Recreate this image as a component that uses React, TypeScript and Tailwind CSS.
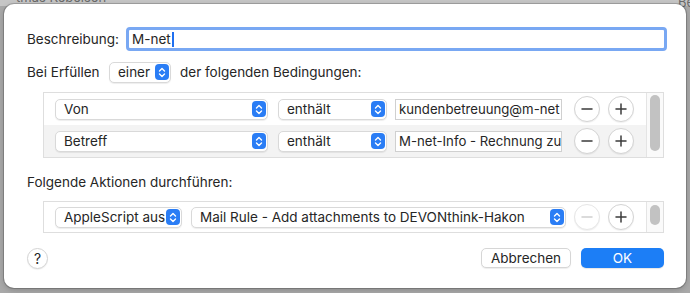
import type { ReactNode } from 'react';

const font = { fontFamily: 'Inter, "Liberation Sans", sans-serif' };

function Stepper() {
  return (
    <span className="flex h-[16px] w-[14px] shrink-0 items-center justify-center rounded-[4px] bg-[#2a7df5]">
      <svg width="8" height="11" viewBox="0 0 8 11" fill="none">
        <path d="M1.5 4 L4 1.6 L6.5 4" stroke="white" strokeWidth="1.4" strokeLinecap="round" strokeLinejoin="round" />
        <path d="M1.5 7 L4 9.4 L6.5 7" stroke="white" strokeWidth="1.4" strokeLinecap="round" strokeLinejoin="round" />
      </svg>
    </span>
  );
}

function Popup({ label, className }: { label: string; className: string }) {
  return (
    <div
      className={`flex h-[21px] shrink-0 items-center rounded-[5px] border border-[#d9d9d9] bg-white pl-[8px] pr-[1px] shadow-[0_1px_1px_rgba(0,0,0,0.07)] ${className}`}
    >
      <span className="flex-1 overflow-hidden whitespace-nowrap leading-[19px]">{label}</span>
      <Stepper />
    </div>
  );
}

function TextField({ value }: { value: string }) {
  return (
    <div className="flex h-[21px] w-[167px] shrink-0 items-center overflow-hidden whitespace-nowrap border border-[#d0d0d0] bg-white pl-[3px] text-[13.2px] leading-[19px]">
      {value}
    </div>
  );
}

function RoundButton({ sign, disabled }: { sign: '-' | '+'; disabled?: boolean }) {
  const color = disabled ? '#cfcfcf' : '#3b3b3b';
  return (
    <div
      className={`flex h-[26px] w-[26px] shrink-0 items-center justify-center rounded-full border bg-white shadow-[0_1px_1px_rgba(0,0,0,0.06)] ${
        disabled ? 'border-[#e6e6e6]' : 'border-[#d4d4d4]'
      }`}
    >
      <svg width="12" height="12" viewBox="0 0 12 12">
        <path d="M1 6 H11" stroke={color} strokeWidth="1.5" strokeLinecap="round" />
        {sign === '+' && <path d="M6 1 V11" stroke={color} strokeWidth="1.5" strokeLinecap="round" />}
      </svg>
    </div>
  );
}

function Scroller({ thumb }: { thumb: string }) {
  return (
    <div className="flex w-[17px] shrink-0 justify-center border-l border-[#e4e4e4] bg-[#fafafa]">
      <div className={`w-[10px] rounded-full bg-[#c2c2c2] ${thumb}`} />
    </div>
  );
}

function Row({ children, shaded }: { children: ReactNode; shaded?: boolean }) {
  return (
    <div className={`flex flex-1 items-center pl-[11px] ${shaded ? 'bg-[#f3f3f3]' : 'bg-white'}`}>
      {children}
    </div>
  );
}

export default function App() {
  return (
    <div className="relative h-[293px] w-[690px] overflow-hidden bg-[#a9a9a9] text-[13.5px] text-[#262626]" style={font}>
      {/* window behind the sheet */}
      <div className="absolute left-0 top-0 h-[6px] w-full bg-[#c6c6c6]" />
      <div className="absolute left-[16px] top-[-9px] text-[13px] leading-[13px] text-[#6a6a6a]">tmas Kebelsen</div>
      <div className="absolute right-[-4px] top-[-4px] text-[13px] leading-[13px] text-[#6a6a6a]">Be</div>

      <div className="relative ml-[4px] mt-[4px] h-[284px] w-[682px] rounded-[10px] bg-white pl-[23px] pr-[22px] pt-[23px] shadow-[0_0_0_1px_rgba(0,0,0,0.18),0_2px_6px_rgba(0,0,0,0.2)]">
        <div className="flex h-[24px] items-center">
          <span className="w-[99px] shrink-0">Beschreibung:</span>
          <div className="flex h-[24px] w-[541px] shrink-0 items-center rounded-[4px] border-[3px] border-[#79a8f3] bg-white pl-[3px] leading-[18px]">
            M-net
            <span className="ml-px h-[15px] w-[2px] bg-[#1f6ff0]" />
          </div>
        </div>

        <div className="mt-[11px] flex h-[20px] items-center">
          <span className="w-[82px] shrink-0">Bei Erfüllen</span>
          <Popup label="einer" className="h-[20px] w-[62px]" />
          <span className="ml-[9px]">der folgenden Bedingungen:</span>
        </div>

        <div className="ml-[16px] mt-[10px] flex h-[66px] border border-[#dedede]">
          <div className="flex flex-1 flex-col">
            <Row>
              <Popup label="Von" className="w-[213px]" />
              <Popup label="enthält" className="ml-[10px] w-[109px]" />
              <div className="ml-[8px]">
                <TextField value="kundenbetreuung@m-net" />
              </div>
              <div className="ml-[12px] flex gap-[8px]">
                <RoundButton sign="-" />
                <RoundButton sign="+" />
              </div>
            </Row>
            <Row shaded>
              <Popup label="Betreff" className="w-[213px]" />
              <Popup label="enthält" className="ml-[10px] w-[109px]" />
              <div className="ml-[8px]">
                <TextField value="M-net-Info - Rechnung zur Bestellung" />
              </div>
              <div className="ml-[12px] flex gap-[8px]">
                <RoundButton sign="-" />
                <RoundButton sign="+" />
              </div>
            </Row>
          </div>
          <Scroller thumb="mt-[2px] h-[56px]" />
        </div>

        <div className="mt-[16px] h-[16px] leading-[16px]">Folgende Aktionen durchführen:</div>

        <div className="ml-[16px] mt-[11px] flex h-[32px] border border-[#dedede]">
          <Row>
            <Popup label="AppleScript aus" className="w-[127px] pl-[7px]" />
            <Popup label="Mail Rule - Add attachments to DEVONthink-Hakon" className="ml-[9px] w-[375px]" />
            <div className="ml-[8px] flex gap-[8px]">
              <RoundButton sign="-" disabled />
              <RoundButton sign="+" />
            </div>
          </Row>
          <Scroller thumb="mt-[3px] h-[20px]" />
        </div>

        <div className="mt-[15px] flex h-[20px] items-center">
          <div className="flex h-[21px] w-[21px] items-center justify-center rounded-full border border-[#d4d4d4] bg-white text-[14px] shadow-[0_1px_1px_rgba(0,0,0,0.06)]">
            ?
          </div>
          <div className="ml-auto flex h-[20px] w-[90px] items-center justify-center rounded-[5px] border border-[#d6d6d6] bg-white shadow-[0_1px_1px_rgba(0,0,0,0.07)]">
            Abbrechen
          </div>
          <div className="ml-[10px] flex h-[20px] w-[83px] items-center justify-center rounded-[5px] bg-[#1c7ef6] text-white shadow-[0_1px_1px_rgba(0,0,0,0.1)]">
            OK
          </div>
        </div>
      </div>
    </div>
  );
}
